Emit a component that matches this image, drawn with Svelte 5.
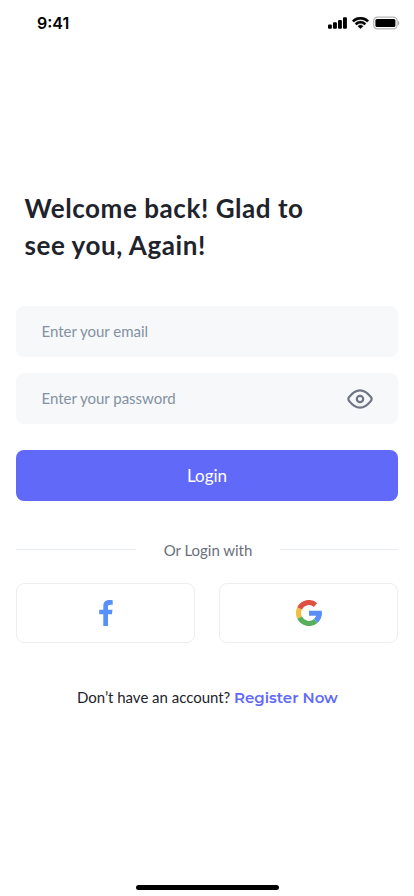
<script>
  let email = $state('');
  let password = $state('');
  let visible = $state(false);
</script>

<main class="screen">
  <header class="status">
    <span class="time">9:41</span>
    <div class="indicators">
      <svg class="signal" width="19" height="12" viewBox="0 0 19 12" aria-hidden="true">
        <rect x="0" y="7.4" width="3.9" height="4.3" rx="1" />
        <rect x="5" y="5.2" width="3.9" height="6.5" rx="1" />
        <rect x="10" y="2.9" width="3.9" height="8.8" rx="1" />
        <rect x="15" y="0.3" width="3.9" height="11.4" rx="1" />
      </svg>
      <svg class="wifi" width="17" height="12" viewBox="0 0 17 12" aria-hidden="true">
        <path stroke="#000" stroke-width=".3" d="M8.5 2.5c2.4 0 4.7.9 6.4 2.6.1.1.3.1.5 0l1.2-1.3c.1-.1.1-.3 0-.5-4.500-4.300-11.700-4.300-16.200 0-.1.1-.1.300 0 .500l1.200 1.300c.1.1.3.1.5 0 1.700-1.700 4-2.600 6.400-2.600zm0 4.100c1.300 0 2.600.5 3.600 1.400.1.1.3.1.5 0l1.200-1.300c.1-.1.1-.4 0-.5-3-2.800-7.600-2.800-10.600 0-.1.1-.1.4 0 .5l1.200 1.300c.1.1.3.1.5 0 1-.9 2.300-1.400 3.600-1.400zm2.400 2.800c.1-.1.1-.4 0-.5-1.400-1.200-3.400-1.200-4.800 0-.1.1-.1.4 0 .5l2.100 2.200c.1.1.4.1.5 0z" />
      </svg>
      <svg class="battery" width="27" height="14" viewBox="0 0 27 14" aria-hidden="true">
        <rect x=".7" y="1.2" width="23.4" height="11.6" rx="3.6" fill="none" stroke="#b5b5b5" stroke-width="1.2" />
        <rect x="2.4" y="2.9" width="20" height="8.2" rx="1.6" />
        <path d="M25 5v4.200c.8-.4 1.300-1.200 1.300-2.100S25.800 5.400 25 5z" fill="#aaa" />
      </svg>
    </div>
  </header>

  <h1>Welcome back! Glad to<br />see you, Again!</h1>

  <form onsubmit={(e) => e.preventDefault()}>
    <div class="field">
      <input type="email" placeholder="Enter your email" aria-label="Email" bind:value={email} />
    </div>
    <div class="field">
      <input
        type={visible ? 'text' : 'password'}
        placeholder="Enter your password"
        aria-label="Password"
        bind:value={password}
      />
      <button class="eye" type="button" aria-label="Show password" onclick={() => (visible = !visible)}>
        <svg width="26" height="20" viewBox="0 0 26 20" fill="none" stroke="#6f7583" stroke-width="2.2" stroke-linejoin="round">
          <path d="M2.300 12.200C.9 10.500.9 9.500 2.300 7.800 4.700 4.700 8.400 1.300 13 1.300s8.300 3.400 10.700 6.500c1.400 1.700 1.400 2.700 0 4.400-2.400 3.100-6.100 6.500-10.700 6.500S4.700 15.300 2.300 12.200z" />
          <circle cx="13" cy="10" r="3.200" />
        </svg>
      </button>
    </div>
    <button class="login" type="submit">Login</button>
  </form>

  <div class="divider"><i></i><span>Or Login with</span><i></i></div>

  <div class="social">
    <button aria-label="Facebook">
      <svg width="14" height="26" viewBox="0 0 14 26" aria-hidden="true">
        <path fill="#5790f8" d="M9 26V14.300h3.900l.6-4.500H9V7c0-1.400.5-2.200 2.300-2.200h2.400V.3C13.200.2 11.900.1 10.300.1 6.700.1 4.300 2.100 4.300 6.100v3.700H.2v4.500h4.100V26z" />
      </svg>
    </button>
    <button aria-label="Google">
      <svg width="26" height="26" viewBox="0 0 26 26" fill="none" stroke-width="5.1" aria-hidden="true">
        <path stroke="#f3bd42" d="M3.600 8.400a10.400 10.400 0 0 0 0 9.200" />
        <path stroke="#e05040" d="M3.600 8.400A10.400 10.400 0 0 1 19.500 4.900" />
        <path stroke="#58b05c" d="M3.600 17.600A10.400 10.400 0 0 0 19.700 21" />
        <path stroke="#5a8df5" d="M19.700 21a10.400 10.400 0 0 0 3.600-7.600" />
        <path fill="#5a8df5" d="M13 10.700h12.700q.2 1.200.2 2.500l-.3 2.600H13z" />
      </svg>
    </button>
  </div>

  <p class="register">Don’t have an account? <a href="#register">Register Now</a></p>

  <div class="home"></div>
</main>

<style>
  :global(body) {
    background: #fff;
  }
  .screen {
    box-sizing: border-box;
    width: 414px;
    height: 896px;
    padding: 0 16px;
    display: flex;
    flex-direction: column;
    overflow: hidden;
    background: #fff;
    font-family: Lato, sans-serif;
  }
  button {
    font: inherit;
    padding: 0;
    cursor: pointer;
  }
  svg {
    display: block;
  }
  .status {
    height: 46px;
    display: flex;
    justify-content: space-between;
    align-items: center;
    padding-left: 21px;
    margin-right: -2px;
    flex: none;
  }
  .time {
    font: 600 16px/20px Inter, sans-serif;
    color: #000;
  }
  .indicators {
    display: flex;
    align-items: center;
  }
  .wifi {
    margin: 0 4px 0 5px;
  }
  h1 {
    margin: 144px 0 0;
    padding-left: 8.5px;
    font-size: 26px;
    line-height: 37px;
    font-weight: 700;
    letter-spacing: 0.56px;
    color: #1e232c;
    white-space: nowrap;
  }
  form {
    margin-top: 42px;
  }
  .field {
    height: 51px;
    margin-bottom: 16px;
    display: flex;
    align-items: center;
    padding: 0 25px 0 25.5px;
    border-radius: 8px;
    background: #f7f8fa;
  }
  input {
    flex: 1;
    min-width: 0;
    height: 30px;
    margin-bottom: 2px;
    padding: 0;
    border: 0;
    outline: 0;
    background: none;
    font: 400 15px/20px Lato, sans-serif;
    letter-spacing: -0.02px;
    color: #1e232c;
  }
  input::placeholder {
    color: #8391a1;
    opacity: 1;
  }
  .eye {
    border: 0;
    background: none;
  }
  .login {
    display: block;
    width: 100%;
    height: 51px;
    margin-top: 26px;
    border: 0;
    border-radius: 8px;
    background: #616af8;
    color: #fff;
    font-size: 17px;
  }
  .divider {
    height: 20px;
    margin-top: 39px;
    display: flex;
    align-items: center;
    justify-content: space-between;
    font-size: 15px;
    letter-spacing: -0.02px;
    color: #6a707c;
  }
  .divider i {
    width: 120px;
    height: 1px;
    margin-bottom: 1px;
    background: #e8ecf4;
  }
  .divider i:last-child {
    width: 118px;
  }
  .social {
    display: flex;
    gap: 24px;
    margin-top: 23px;
  }
  .social button {
    flex: 1;
    height: 60px;
    display: flex;
    align-items: center;
    justify-content: center;
    border: 1px solid #eeeeef;
    border-radius: 8px;
    background: #fff;
  }
  .register {
    margin: 43px 0 0;
    padding-left: 61px;
    font-size: 15px;
    line-height: 22px;
    letter-spacing: -0.02px;
    color: #1e232c;
    white-space: nowrap;
  }
  .register a {
    font-family: Montserrat, Inter, sans-serif;
    font-weight: 600;
    color: #616af8;
    text-decoration: none;
  }
  .home {
    width: 143px;
    height: 5px;
    margin: auto auto 6px 119.5px;
    border-radius: 3px;
    background: #000;
  }
</style>
